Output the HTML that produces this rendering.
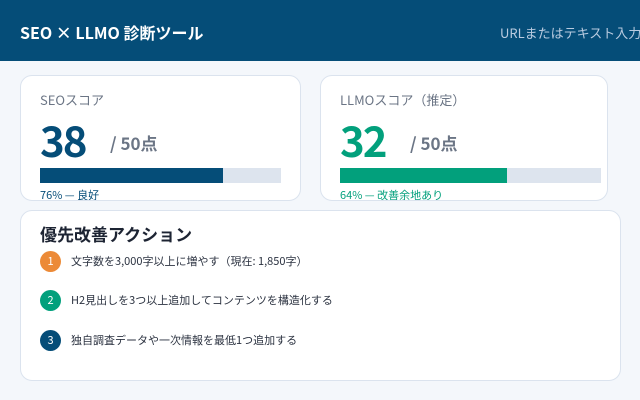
<!DOCTYPE html>
<html><head><meta charset="utf-8"><style>
*{margin:0;padding:0;box-sizing:border-box}
body{width:640px;height:400px;overflow:hidden;background:#f4f7fb;font-family:"Noto Sans CJK JP","Liberation Sans",sans-serif;position:relative}
.hd{position:absolute;left:0;top:0;width:640px;height:61px;background:#054d78}
.hd .t{position:absolute;left:20px;top:20px;color:#fff;font-size:16px;font-weight:bold;white-space:nowrap;line-height:24px}
.hd .r{position:absolute;left:500px;top:23px;color:#b9cbe0;font-size:13px;white-space:nowrap;line-height:20px}
.card{position:absolute;background:#fff;border:1px solid #dbe3ee;border-radius:12px;overflow:hidden}
.lbl{position:absolute;left:19px;top:14px;font-size:13px;color:#6b7585;white-space:nowrap;line-height:20px}
.num{position:absolute;left:19px;top:38px;font-size:42px;font-weight:bold;line-height:52px;letter-spacing:-2px}
.of{position:absolute;left:89px;top:55px;font-size:17px;font-weight:bold;color:#6b7585;white-space:nowrap;line-height:24px}
.bar{position:absolute;left:19px;top:92px;width:241px;height:15px;background:#dde4ee}
.bar i{display:block;height:100%}
.pc{position:absolute;left:19px;top:111px;font-size:11px;white-space:nowrap;line-height:16px}
.h2{position:absolute;left:19px;top:11px;font-size:17px;font-weight:bold;color:#1d2433;white-space:nowrap;line-height:24px}
.it{position:absolute;left:19px;height:21px;font-size:11px;color:#2b3240;white-space:nowrap}
.it b{position:absolute;left:0;top:0;width:21px;height:21px;border-radius:50%;color:#fff;font-weight:normal;font-size:11px;text-align:center;line-height:21px}
.it span{position:absolute;left:31px;top:2px;line-height:16px}
</style></head><body>
<div class="hd"><div class="t">SEO × LLMO 診断ツール</div><div class="r">URLまたはテキスト入力</div></div>
<div class="card" style="left:20px;top:75px;width:281px;height:126px">
<div class="lbl">SEOスコア</div><div class="num" style="color:#054d78">38</div><div class="of">/ 50点</div>
<div class="bar"><i style="width:183px;background:#054d78"></i></div>
<div class="pc" style="color:#054d78">76% — 良好</div></div>
<div class="card" style="left:320px;top:75px;width:288px;height:126px">
<div class="lbl">LLMOスコア（推定）</div><div class="num" style="color:#02a07c">32</div><div class="of">/ 50点</div>
<div class="bar" style="width:261px"><i style="width:167px;background:#02a07c"></i></div>
<div class="pc" style="color:#02a07c">64% — 改善余地あり</div></div>
<div class="card" style="left:20px;top:210px;width:601px;height:171px">
<div class="h2">優先改善アクション</div>
<div class="it" style="top:40px"><b style="background:#ec8a37">1</b><span>文字数を3,000字以上に増やす（現在: 1,850字）</span></div>
<div class="it" style="top:79px"><b style="background:#02a07c">2</b><span>H2見出しを3つ以上追加してコンテンツを構造化する</span></div>
<div class="it" style="top:119px"><b style="background:#054d78">3</b><span>独自調査データや一次情報を最低1つ追加する</span></div>
</div>
</body></html>
